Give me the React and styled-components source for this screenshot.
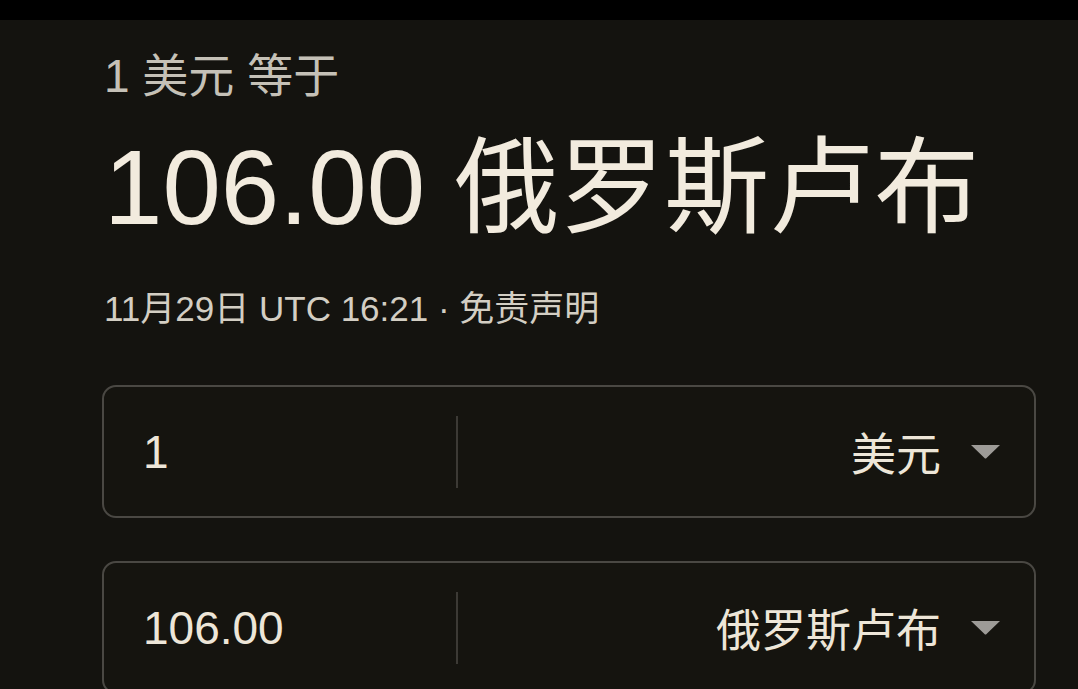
import React from 'react';
import styled, { createGlobalStyle } from 'styled-components';

const GlobalStyle = createGlobalStyle`
  html, body {
    margin: 0;
    padding: 0;
    background: #14130f;
  }
  body {
    font-family: 'Liberation Sans', Arial, 'Noto Sans CJK SC', sans-serif;
    overflow: hidden;
  }
`;

const TopBar = styled.div`
  height: 20px;
  background: #000;
`;

const Page = styled.main`
  padding: 28px 42px 0 102px;
  height: 669px;
  box-sizing: border-box;
  background: #14130f;
`;

const Lead = styled.div`
  font-size: 46px;
  line-height: 56px;
  color: #c5c1b7;
  padding-left: 2px;
`;

const Result = styled.div`
  margin-top: 22px;
  font-size: 105px;
  line-height: 124px;
  color: #f2ebde;
  padding-left: 2px;
  white-space: nowrap;
`;

const Stamp = styled.div`
  margin-top: 38px;
  font-size: 35px;
  line-height: 42px;
  color: #d3cec3;
  padding-left: 2px;
`;

const Fields = styled.div`
  margin-top: 55px;
  display: flex;
  flex-direction: column;
  gap: 43px;
`;

const Field = styled.div`
  height: 133px;
  box-sizing: border-box;
  border: 2px solid #4a4843;
  border-radius: 14px;
  display: flex;
  align-items: center;
  background: #15140f;
`;

const Amount = styled.div`
  width: 352px;
  box-sizing: border-box;
  padding-left: 39px;
  font-size: 46px;
  color: #ede6d8;
`;

const Divider = styled.div`
  width: 2px;
  height: 72px;
  background: #3c3a35;
`;

const Currency = styled.div`
  flex: 1;
  display: flex;
  justify-content: flex-end;
  align-items: center;
  gap: 29px;
  padding-right: 33px;
  font-size: 45px;
  color: #ede6d8;
`;

const Caret = () => (
  <svg width="31" height="15" viewBox="0 0 31 15">
    <path d="M1 1 H30 L16.5 14 Q15.5 15 14.5 14 Z" fill="#9d9b97" />
  </svg>
);

const ConverterRow = ({ amount, currency }) => (
  <Field>
    <Amount>{amount}</Amount>
    <Divider />
    <Currency>
      <span>{currency}</span>
      <Caret />
    </Currency>
  </Field>
);

const App = () => (
  <>
    <GlobalStyle />
    <TopBar />
    <Page>
      <Lead>1 美元 等于</Lead>
      <Result>106.00 俄罗斯卢布</Result>
      <Stamp>11月29日 UTC 16:21 · 免责声明</Stamp>
      <Fields>
        <ConverterRow amount="1" currency="美元" />
        <ConverterRow amount="106.00" currency="俄罗斯卢布" />
      </Fields>
    </Page>
  </>
);

export default App;
